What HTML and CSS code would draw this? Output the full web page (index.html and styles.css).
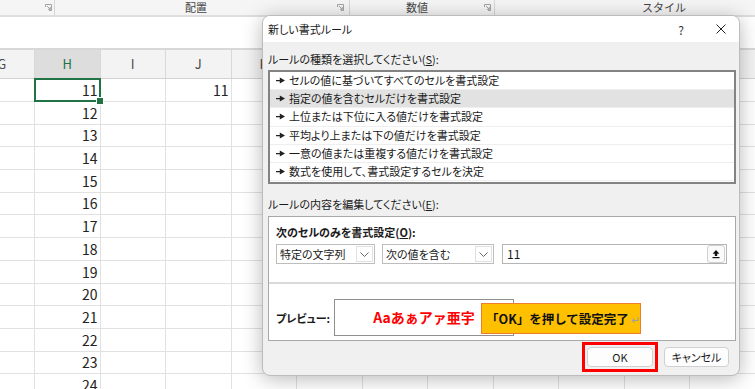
FILE: index.html
```html
<!DOCTYPE html>
<html lang="ja">
<head>
    <meta charset="UTF-8">
    <title>新しい書式ルール</title>
    <link rel="stylesheet" href="styles.css">
</head>
<body>
    <div class="app">
        <div class="ribbon">
            <div class="group g-first">
                <svg class="launcher" width="7" height="7" viewBox="0 0 7 7"><path d="M0.5 3V0.5H6.5V6.5H4" fill="none" stroke="#a3a3a3"/><path d="M2 2L5.3 5.3M5.3 3V5.3H3" fill="none" stroke="#a3a3a3"/></svg>
            </div>
            <div class="group g-align">
                <span class="group-label">配置</span>
                <svg class="launcher" width="7" height="7" viewBox="0 0 7 7"><path d="M0.5 3V0.5H6.5V6.5H4" fill="none" stroke="#a3a3a3"/><path d="M2 2L5.3 5.3M5.3 3V5.3H3" fill="none" stroke="#a3a3a3"/></svg>
            </div>
            <div class="group g-number">
                <span class="group-label">数値</span>
                <svg class="launcher" width="7" height="7" viewBox="0 0 7 7"><path d="M0.5 3V0.5H6.5V6.5H4" fill="none" stroke="#a3a3a3"/><path d="M2 2L5.3 5.3M5.3 3V5.3H3" fill="none" stroke="#a3a3a3"/></svg>
            </div>
            <div class="group g-style">
                <span class="group-label">スタイル</span>
            </div>
        </div>

        <div class="formula-bar"></div>

        <div class="sheet">
            <div class="row head">
                <span>G</span><span class="sel">H</span><span>I</span><span>J</span><span>K</span><span>L</span><span>M</span><span>N</span><span>O</span><span>P</span><span>Q</span><span>R</span><span>S</span>
            </div>
            <div class="row"><span></span><span class="num active">11</span><span></span><span class="num">11</span><span></span><span></span><span></span><span></span><span></span><span></span><span></span><span></span><span></span></div>
            <div class="row"><span></span><span class="num">12</span><span></span><span></span><span></span><span></span><span></span><span></span><span></span><span></span><span></span><span></span><span></span></div>
            <div class="row"><span></span><span class="num">13</span><span></span><span></span><span></span><span></span><span></span><span></span><span></span><span></span><span></span><span></span><span></span></div>
            <div class="row"><span></span><span class="num">14</span><span></span><span></span><span></span><span></span><span></span><span></span><span></span><span></span><span></span><span></span><span></span></div>
            <div class="row"><span></span><span class="num">15</span><span></span><span></span><span></span><span></span><span></span><span></span><span></span><span></span><span></span><span></span><span></span></div>
            <div class="row"><span></span><span class="num">16</span><span></span><span></span><span></span><span></span><span></span><span></span><span></span><span></span><span></span><span></span><span></span></div>
            <div class="row"><span></span><span class="num">17</span><span></span><span></span><span></span><span></span><span></span><span></span><span></span><span></span><span></span><span></span><span></span></div>
            <div class="row"><span></span><span class="num">18</span><span></span><span></span><span></span><span></span><span></span><span></span><span></span><span></span><span></span><span></span><span></span></div>
            <div class="row"><span></span><span class="num">19</span><span></span><span></span><span></span><span></span><span></span><span></span><span></span><span></span><span></span><span></span><span></span></div>
            <div class="row"><span></span><span class="num">20</span><span></span><span></span><span></span><span></span><span></span><span></span><span></span><span></span><span></span><span></span><span></span></div>
            <div class="row"><span></span><span class="num">21</span><span></span><span></span><span></span><span></span><span></span><span></span><span></span><span></span><span></span><span></span><span></span></div>
            <div class="row"><span></span><span class="num">22</span><span></span><span></span><span></span><span></span><span></span><span></span><span></span><span></span><span></span><span></span><span></span></div>
            <div class="row"><span></span><span class="num">23</span><span></span><span></span><span></span><span></span><span></span><span></span><span></span><span></span><span></span><span></span><span></span></div>
            <div class="row"><span></span><span class="num">24</span><span></span><span></span><span></span><span></span><span></span><span></span><span></span><span></span><span></span><span></span><span></span></div>
        </div>

        <div class="dialog">
            <div class="dlg-title">
                <span class="dlg-name">新しい書式ルール</span>
                <span class="title-btn help">?</span>
                <span class="title-btn close">
                    <svg width="10" height="10" viewBox="0 0 10 10"><path d="M0.5 0.5L9.5 9.5M9.5 0.5L0.5 9.5" stroke="#222" stroke-width="1"/></svg>
                </span>
            </div>

            <div class="dlg-body">
                <div class="dlg-label">ルールの種類を選択してください(<u>S</u>):</div>
                <ul class="rule-list">
                    <li><svg class="bullet" width="9" height="7" viewBox="0 0 9 7"><path d="M0 2.9h4.5v1.3H0z M3.8 0.4L9 3.5 3.8 6.6z" fill="#222"/></svg>セルの値に基づいてすべてのセルを書式設定</li>
                    <li class="selected"><svg class="bullet" width="9" height="7" viewBox="0 0 9 7"><path d="M0 2.9h4.5v1.3H0z M3.8 0.4L9 3.5 3.8 6.6z" fill="#222"/></svg>指定の値を含むセルだけを書式設定</li>
                    <li><svg class="bullet" width="9" height="7" viewBox="0 0 9 7"><path d="M0 2.9h4.5v1.3H0z M3.8 0.4L9 3.5 3.8 6.6z" fill="#222"/></svg>上位または下位に入る値だけを書式設定</li>
                    <li><svg class="bullet" width="9" height="7" viewBox="0 0 9 7"><path d="M0 2.9h4.5v1.3H0z M3.8 0.4L9 3.5 3.8 6.6z" fill="#222"/></svg>平均より上または下の値だけを書式設定</li>
                    <li><svg class="bullet" width="9" height="7" viewBox="0 0 9 7"><path d="M0 2.9h4.5v1.3H0z M3.8 0.4L9 3.5 3.8 6.6z" fill="#222"/></svg>一意の値または重複する値だけを書式設定</li>
                    <li><svg class="bullet" width="9" height="7" viewBox="0 0 9 7"><path d="M0 2.9h4.5v1.3H0z M3.8 0.4L9 3.5 3.8 6.6z" fill="#222"/></svg>数式を使用して、書式設定するセルを決定</li>
                </ul>

                <div class="dlg-label second">ルールの内容を編集してください(<u>E</u>):</div>
                <div class="rule-edit">
                    <div class="edit-top">
                        <div class="edit-heading">次のセルのみを書式設定(<u>O</u>):</div>
                        <div class="edit-controls">
                            <div class="select s-type">
                                <span class="select-text">特定の文字列</span>
                                <span class="chev"><svg width="9" height="5" viewBox="0 0 9 5"><path d="M0.5 0.5L4.5 4.5 8.5 0.5" fill="none" stroke="#666"/></svg></span>
                            </div>
                            <div class="select s-op">
                                <span class="select-text">次の値を含む</span>
                                <span class="chev"><svg width="9" height="5" viewBox="0 0 9 5"><path d="M0.5 0.5L4.5 4.5 8.5 0.5" fill="none" stroke="#666"/></svg></span>
                            </div>
                            <div class="value-input">
                                <span class="value-text">11</span>
                                <span class="ref-btn"><svg width="10" height="10" viewBox="0 0 10 10"><path d="M5 1L1.6 4.8H3.8V7H6.2V4.8H8.4Z" fill="#111"/><path d="M1.5 8.6H8.5" stroke="#111" stroke-width="1.2"/></svg></span>
                            </div>
                        </div>
                    </div>
                    <div class="preview-row">
                        <span class="preview-label">プレビュー:</span>
                        <div class="preview-box">Aaあぁアァ亜宇</div>
                        <div class="callout">「OK」を押して設定完了<span class="ret">↵</span></div>
                    </div>
                </div>

                <div class="dlg-buttons">
                    <span class="ok-mark"><button class="btn ok">OK</button></span>
                    <button class="btn">キャンセル</button>
                </div>
            </div>
        </div>
    </div>
</body>
</html>
```

FILE: styles.css
```css
* {
    margin: 0;
    padding: 0;
    box-sizing: border-box;
}

body {
    font-family: "Noto Sans CJK JP", "Liberation Sans", sans-serif;
    color: #222;
    background: #fff;
    overflow: hidden;
}

.app {
    position: relative;
    width: 755px;
    height: 389px;
    overflow: hidden;
}

/* ribbon */
.ribbon {
    display: flex;
    height: 17px;
    background: #f5f5f5;
    border-bottom: 2px solid #dedede;
}

.group {
    display: flex;
    align-items: center;
    height: 15px;
    border-right: 1px solid #d6d6d6;
    padding-right: 2px;
    flex-shrink: 0;
}

.g-first {
    width: 55px;
    justify-content: flex-end;
}

.g-align {
    width: 295px;
    padding-right: 5px;
}

.g-number {
    width: 145px;
    padding-right: 3px;
}

.g-style {
    width: 340px;
    border-right: none;
}

.group-label {
    flex: 1;
    text-align: center;
    font-size: 11px;
    line-height: 13px;
    color: #444;
}

.launcher {
    display: block;
}

.formula-bar {
    height: 33px;
    background: #fff;
    border-bottom: 2px solid #d8d8d8;
}

/* sheet */
.sheet {
    margin-left: -30.5px;
}

.row {
    display: grid;
    grid-template-columns: repeat(13, 65.5px);
    height: 22.7px;
}

.row span {
    display: block;
    border-right: 1px solid #e1e1e1;
    border-bottom: 1px solid #e1e1e1;
}

.row.head {
    height: 29px;
    background: #f3f3f3;
}

.row.head span {
    text-align: center;
    font-size: 13px;
    line-height: 28px;
    color: #4a4a4a;
    border-right-color: #d8d8d8;
    border-bottom-color: #d2d2d2;
}

.row.head .sel {
    background: #dddddd;
    color: #217346;
}

.num {
    text-align: right;
    padding-right: 2px;
    font-size: 14px;
    line-height: 22px;
    color: #222;
}

.active {
    position: relative;
}

.active::after {
    content: "";
    position: absolute;
    top: -1px;
    left: -1px;
    right: -1px;
    bottom: -1px;
    border: 2px solid #217346;
}

.active::before {
    content: "";
    position: absolute;
    right: -4px;
    bottom: -4px;
    width: 6px;
    height: 6px;
    background: #217346;
    border: 1px solid #fff;
    z-index: 1;
}

/* dialog */
.dialog {
    position: absolute;
    left: 262px;
    top: 15px;
    width: 478px;
    height: 361px;
    background: #f0f0f0;
    border: 1px solid #bcbcbc;
    border-radius: 8px;
    box-shadow: 0 3px 20px rgba(0, 0, 0, 0.28);
    overflow: hidden;
    font-size: 11px;
    font-feature-settings: "palt";
    color: #1a1a1a;
}

.dlg-title {
    display: flex;
    align-items: center;
    height: 26px;
    background: #fff;
}

.dlg-name {
    flex: 1;
    padding-left: 5px;
    font-size: 11px;
}

.title-btn {
    display: flex;
    align-items: center;
    justify-content: center;
    height: 26px;
}

.help {
    width: 44px;
    font-size: 12px;
    color: #333;
}

.close {
    width: 36px;
}

.dlg-body {
    padding: 0 3px 0 5px;
}

.dlg-label {
    margin-top: 9px;
    line-height: 16px;
}

.dlg-label.second {
    margin-top: 12px;
}

.rule-list {
    list-style: none;
    margin-top: 3px;
    height: 114px;
    background: #fff;
    border: 2px solid #838383;
}

.rule-list li {
    display: flex;
    align-items: center;
    gap: 4px;
    height: 18.2px;
    padding-left: 6px;
    border-bottom: 1px solid #eeeeee;
    line-height: 17px;
}

.rule-list li.selected {
    background: #e2e2e2;
}

.bullet {
    flex-shrink: 0;
}

.rule-edit {
    margin-top: 4px;
    background: #fff;
    border: 1px solid #a8a8a8;
}

.edit-top {
    padding: 7px 8px 18px 7px;
    border-bottom: 2px solid #dadada;
}

.edit-heading {
    font-weight: 700;
    line-height: 16px;
}

.edit-controls {
    display: flex;
    gap: 7px;
    margin-top: 4px;
    height: 20px;
}

.select {
    display: flex;
    align-items: stretch;
    border: 1px solid #bdbdbd;
    background: #fff;
}

.s-type {
    width: 99px;
}

.s-op {
    width: 112px;
}

.select-text {
    flex: 1;
    padding-left: 3px;
    line-height: 18px;
}

.chev {
    display: flex;
    align-items: center;
    justify-content: center;
    width: 17px;
    margin: 1px;
    border: 1px solid #e0e0e0;
}

.value-input {
    display: flex;
    align-items: center;
    width: 225px;
    margin-left: 1px;
    border: 1px solid #b5b5b5;
    background: #fff;
}

.value-text {
    flex: 1;
    padding-left: 4px;
    font-size: 12px;
    line-height: 18px;
}

.ref-btn {
    display: flex;
    align-items: center;
    justify-content: center;
    width: 18px;
    height: 18px;
    margin-right: 1px;
    border: 1px solid #cfcfcf;
    border-radius: 3px;
    background: #fafafa;
}

.preview-row {
    position: relative;
    display: flex;
    align-items: center;
    height: 56px;
    padding: 15px 0 4px 7px;
}

.preview-label {
    width: 58px;
    font-weight: 700;
}

.preview-box {
    width: 180px;
    height: 37px;
    border: 1px solid #8f8f8f;
    text-align: center;
    line-height: 35px;
    font-size: 14px;
    font-weight: 700;
    color: #ff0000;
    font-feature-settings: normal;
}

.callout {
    position: absolute;
    left: 212px;
    top: 19px;
    width: 160px;
    height: 31px;
    padding-left: 4px;
    background: #ffc000;
    border: 1px solid #ed7d31;
    font-size: 12.5px;
    font-weight: 700;
    line-height: 29px;
    color: #111;
    font-feature-settings: normal;
    white-space: nowrap;
}

.ret {
    margin-left: 2px;
    font-size: 11px;
    font-weight: 400;
    color: #a0a0a0;
}

.dlg-buttons {
    display: flex;
    align-items: center;
    justify-content: flex-end;
    gap: 6px;
    margin-top: 1px;
    padding-right: 7px;
}

.ok-mark {
    display: flex;
    padding: 2px;
    border: 3px solid #ff0000;
}

.btn {
    width: 65px;
    height: 20px;
    background: #fdfdfd;
    border: 1px solid #d0d0d0;
    border-radius: 4px;
    font-family: "Noto Sans CJK JP", sans-serif;
    font-size: 11px;
    font-feature-settings: "palt";
    color: #1a1a1a;
}

.btn.ok {
    width: 66px;
}
```
